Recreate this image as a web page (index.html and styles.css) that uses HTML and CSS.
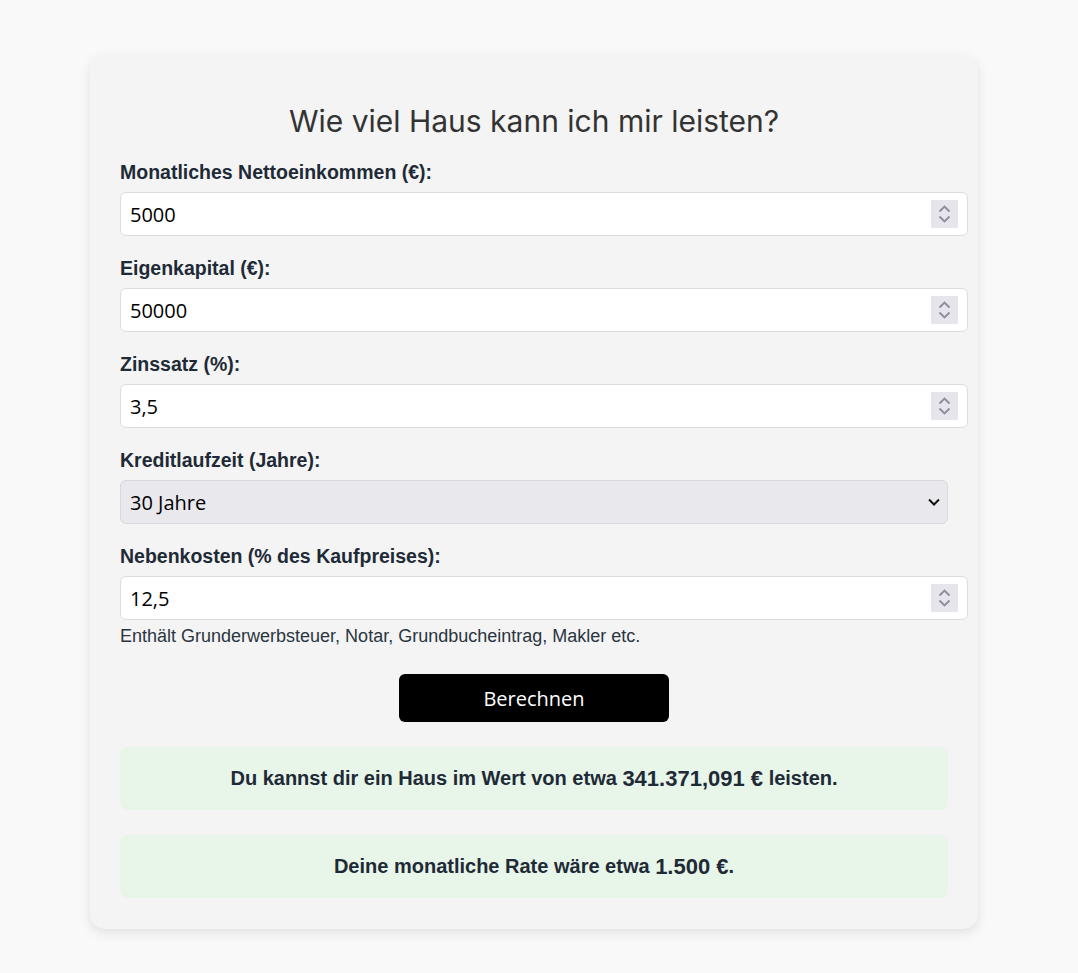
FILE: index.html
```html
<!DOCTYPE html>
<html lang="de">
<head>
    <meta charset="UTF-8">
    <meta name="viewport" content="width=device-width, initial-scale=1.0">
    <title>Hausrechner</title>
    <link rel="stylesheet" href="styles.css">
</head>
<body>
    <div class="container">
        <h1>Wie viel Haus kann ich mir leisten?</h1>

        <div class="field">
            <label for="einkommen">Monatliches Nettoeinkommen (€):</label>
            <div class="zahl">
                <input type="text" id="einkommen" value="5000">
                <span class="spinner">
                    <svg width="27" height="28" viewBox="0 0 27 28"><path d="M8.5 11.5l5-5 5 5M8.5 16.5l5 5 5-5" fill="none" stroke="#8f8b9a" stroke-width="1.8"/></svg>
                </span>
            </div>
        </div>

        <div class="field">
            <label for="eigenkapital">Eigenkapital (€):</label>
            <div class="zahl">
                <input type="text" id="eigenkapital" value="50000">
                <span class="spinner">
                    <svg width="27" height="28" viewBox="0 0 27 28"><path d="M8.5 11.5l5-5 5 5M8.5 16.5l5 5 5-5" fill="none" stroke="#8f8b9a" stroke-width="1.8"/></svg>
                </span>
            </div>
        </div>

        <div class="field">
            <label for="zins">Zinssatz (%):</label>
            <div class="zahl">
                <input type="text" id="zins" value="3,5">
                <span class="spinner">
                    <svg width="27" height="28" viewBox="0 0 27 28"><path d="M8.5 11.5l5-5 5 5M8.5 16.5l5 5 5-5" fill="none" stroke="#8f8b9a" stroke-width="1.8"/></svg>
                </span>
            </div>
        </div>

        <div class="field">
            <label for="laufzeit">Kreditlaufzeit (Jahre):</label>
            <div class="auswahl">
                <select id="laufzeit">
                    <option>10 Jahre</option>
                    <option>20 Jahre</option>
                    <option selected>30 Jahre</option>
                </select>
                <svg class="pfeil" width="14" height="10" viewBox="0 0 14 10"><path d="M2 2.5l5 5 5-5" fill="none" stroke="#111" stroke-width="2"/></svg>
            </div>
        </div>

        <div class="field letzte">
            <label for="nebenkosten">Nebenkosten (% des Kaufpreises):</label>
            <div class="zahl">
                <input type="text" id="nebenkosten" value="12,5">
                <span class="spinner">
                    <svg width="27" height="28" viewBox="0 0 27 28"><path d="M8.5 11.5l5-5 5 5M8.5 16.5l5 5 5-5" fill="none" stroke="#8f8b9a" stroke-width="1.8"/></svg>
                </span>
            </div>
            <p class="hinweis">Enthält Grunderwerbsteuer, Notar, Grundbucheintrag, Makler etc.</p>
        </div>

        <button id="berechnen">Berechnen</button>

        <div class="ergebnis">Du kannst dir ein Haus im Wert von etwa&nbsp;<span class="wert">341.371,091 €</span>&nbsp;leisten.</div>
        <div class="ergebnis">Deine monatliche Rate wäre etwa&nbsp;<span class="wert">1.500 €</span>.</div>
    </div>
</body>
</html>
```

FILE: styles.css
```css
body {
    margin: 0;
    background-color: #f9f9f9;
    font-family: "Liberation Sans", Arial, sans-serif;
    color: #1e2a36;
}

.container {
    width: 828px;
    margin: 55px 0 40px 90px;
    padding: 30px 30px 31px;
    background-color: #f4f4f4;
    border-radius: 15px;
    box-shadow: 0 4px 12px rgba(0, 0, 0, 0.1);
}

h1 {
    font-family: Inter, "Open Sans", sans-serif;
    font-weight: 400;
    font-size: 30px;
    line-height: 34px;
    color: #333;
    text-align: center;
    margin: 19px 0 22px;
}

.field {
    margin-bottom: 20px;
}

label {
    display: block;
    font-weight: bold;
    font-size: 19.5px;
    line-height: 24px;
    margin-bottom: 8px;
}

.zahl {
    display: flex;
    align-items: center;
    width: 848px;
    height: 44px;
    box-sizing: border-box;
    background: white;
    border: 1px solid #dcdcdc;
    border-radius: 6px;
    padding: 0 9px;
}

.zahl input {
    flex: 1;
    border: none;
    outline: none;
    background: transparent;
    padding: 0;
    font-family: "Open Sans", "Noto Sans", sans-serif;
    font-size: 20px;
    color: #000;
}

.spinner {
    display: flex;
    width: 27px;
    height: 28px;
    background: #e6e5ec;
}

.auswahl {
    position: relative;
    margin-top: 1px;
}

.auswahl select {
    -webkit-appearance: none;
    appearance: none;
    width: 100%;
    height: 44px;
    box-sizing: border-box;
    background: #e9e8ed;
    border: 1px solid #d9d8dd;
    border-radius: 6px;
    padding: 0 9px;
    font-family: "Open Sans", "Noto Sans", sans-serif;
    font-size: 20px;
    color: #000;
}

.pfeil {
    position: absolute;
    right: 7px;
    top: 17px;
    pointer-events: none;
}

.letzte {
    margin-bottom: 28px;
}

.hinweis {
    margin: 6px 0 0;
    font-size: 18px;
    line-height: 20px;
    color: #2a3540;
}

button {
    display: block;
    margin: 0 auto 25px;
    width: 270px;
    height: 48px;
    background: #000;
    color: white;
    border: none;
    border-radius: 6px;
    font-family: "Open Sans", "Noto Sans", sans-serif;
    font-size: 20px;
    cursor: pointer;
}

.ergebnis {
    background: #e8f5e9;
    border-radius: 8px;
    height: 63px;
    display: flex;
    align-items: center;
    justify-content: center;
    font-weight: bold;
    font-size: 20px;
    margin-bottom: 25px;
}

.ergebnis:last-child {
    margin-bottom: 0;
}

.wert {
    font-size: 22px;
}
```
